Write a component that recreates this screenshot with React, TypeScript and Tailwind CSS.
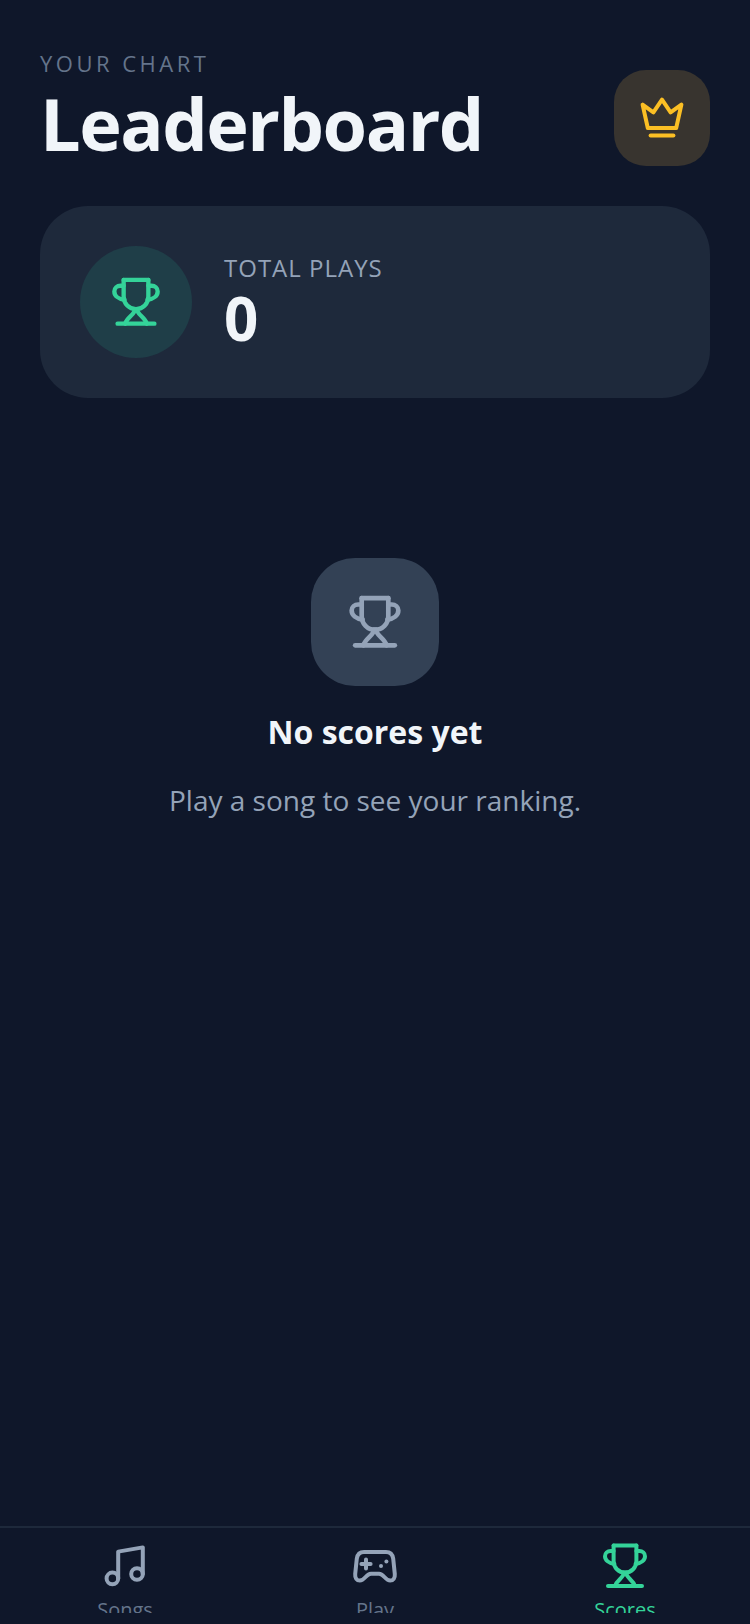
import type { ReactNode } from "react";

type IconProps = { className: string };

const Trophy = ({ className }: IconProps) => (
  <svg viewBox="0 0 24 24" fill="none" stroke="currentColor" strokeWidth="2" strokeLinecap="round" strokeLinejoin="round" className={className}>
    <path d="M6.300 1.800h11.400" />
    <path d="M6.300 1.800v7.700c0 3.300 2.500 5.800 5.700 5.800s5.700-2.500 5.700-5.800V1.800" />
    <path d="M6.300 4.500H4.800C3.300 4.500 2 5.600 2 7.100c0 2 1.900 3.500 4.700 3.900" />
    <path d="M17.700 4.500h1.500C20.700 4.500 22 5.600 22 7.100c0 2-1.900 3.500-4.700 3.900" />
    <path d="M11.500 15.300c0 2.500-3.500 3.500-4.500 6.700" />
    <path d="M12.500 15.300c0 2.500 3.500 3.500 4.500 6.700" />
    <path d="M3.500 22h17" />
  </svg>
);

const Crown = ({ className }: IconProps) => (
  <svg viewBox="0 0 24 24" fill="none" stroke="currentColor" strokeWidth="2" strokeLinecap="round" strokeLinejoin="round" className={className}>
    <path d="M12 2.800l4.300 6.400 5.400-3.900-2.600 11.700H4.900L2.300 5.300l5.400 3.900z" />
    <path d="M6.300 20.800h11.400" />
  </svg>
);

const Music = ({ className }: IconProps) => (
  <svg viewBox="0 0 24 24" fill="none" stroke="currentColor" strokeWidth="2" strokeLinecap="round" strokeLinejoin="round" className={className}>
    <circle cx="5.700" cy="18.200" r="2.900" />
    <circle cx="18" cy="16" r="2.900" />
    <path d="M8.600 18.200V4.800l12.300-2.100V16" />
  </svg>
);

const Gamepad = ({ className }: IconProps) => (
  <svg viewBox="0 0 24 24" fill="none" stroke="currentColor" strokeWidth="2" strokeLinecap="round" strokeLinejoin="round" className={className}>
    <path d="M6.500 5h11c2 0 3.300 1.300 3.600 3.300l.8 7.700c.2 2-.8 3.300-2.300 3.300-1.200 0-2-.8-2.900-1.800-.9-1-1.500-1.600-2.700-1.600H10c-1.200 0-1.800.6-2.700 1.600-.9 1-1.700 1.800-2.900 1.800-1.500 0-2.500-1.300-2.300-3.300l.8-7.700C3.200 6.300 4.500 5 6.500 5z" />
    <path d="M7.500 8.700v4.600M5.200 11h4.600" />
    <circle cx="15" cy="12" r="1" fill="currentColor" stroke="none" />
    <circle cx="17.700" cy="9.800" r="1" fill="currentColor" stroke="none" />
  </svg>
);

const NavItem = ({ icon, label, active }: { icon: ReactNode; label: string; active?: boolean }) => (
  <div className={`flex flex-col items-center ${active ? "text-[#34d399]" : "text-[#94a3b8]"}`}>
    {icon}
    <span className={`mt-[6px] text-[20px] leading-[27px] ${active ? "text-[#34d399]" : "text-[#64748b]"}`}>{label}</span>
  </div>
);

export default function App() {
  return (
    <div className="flex h-[1624px] w-[750px] flex-col overflow-hidden bg-[#0f172a] font-['Open_Sans',sans-serif]">
      <main className="flex-1 px-10 pt-[48px]">
        <header className="flex items-start justify-between">
          <div>
            <p className="text-[22px] leading-[30px] tracking-[3.500px] text-[#64748b]">YOUR CHART</p>
            <h1 className="mt-[2px] text-[72px] leading-[86px] font-bold tracking-[-1.500px] text-[#f1f5f9]">Leaderboard</h1>
          </div>
          <div className="mt-[22px] flex h-24 w-24 items-center justify-center rounded-[32px] bg-[#38342f]">
            <Crown className="h-12 w-12 text-[#fbbf24]" />
          </div>
        </header>

        <section className="mt-10 flex h-[192px] items-center gap-8 rounded-[48px] bg-[#1e293b] px-10">
          <div className="flex h-28 w-28 items-center justify-center rounded-full bg-[#1f3e48]">
            <Trophy className="h-[52px] w-[52px] text-[#34d399]" />
          </div>
          <div>
            <p className="text-[24px] leading-[32px] tracking-[1px] text-[#94a3b8]">TOTAL PLAYS</p>
            <p className="text-[60px] leading-[68px] font-bold text-[#f1f5f9]">0</p>
          </div>
        </section>

        <section className="mt-[160px] flex flex-col items-center">
          <div className="flex h-32 w-32 items-center justify-center rounded-[44px] bg-[#334155]">
            <Trophy className="h-14 w-14 text-[#94a3b8]" />
          </div>
          <h2 className="mt-6 text-[32px] leading-[44px] font-bold text-[#f1f5f9]">No scores yet</h2>
          <p className="mt-6 text-[28px] leading-[44px] text-[#94a3b8]">Play a song to see your ranking.</p>
        </section>
      </main>

      <nav className="h-[98px] border-t-2 border-[#1e293b] bg-[#0f172a]">
        <div className="grid h-[85px] grid-cols-3 overflow-hidden pt-[14px]">
          <NavItem icon={<Music className="h-12 w-12" />} label="Songs" />
          <NavItem icon={<Gamepad className="h-12 w-12" />} label="Play" />
          <NavItem icon={<Trophy className="h-12 w-12" />} label="Scores" active />
        </div>
      </nav>
    </div>
  );
}
